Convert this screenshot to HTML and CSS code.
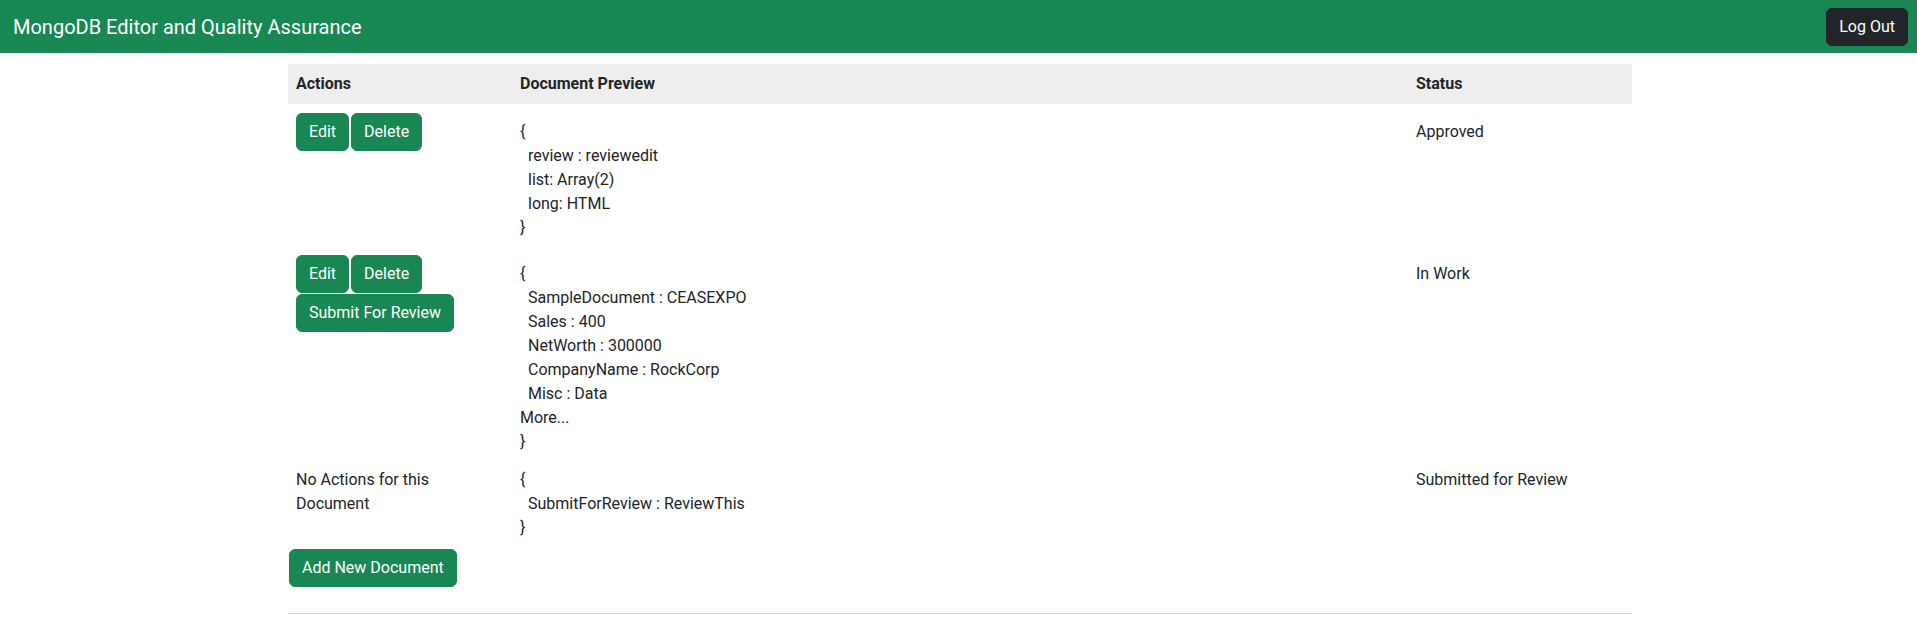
FILE: index.html
```html
<!DOCTYPE html>
<html lang="en">
<head>
<meta charset="utf-8">
<title>MongoDB Editor and Quality Assurance</title>
<link rel="stylesheet" href="styles.css">
</head>
<body>
<nav class="navbar">
  <span class="brand">MongoDB Editor and Quality Assurance</span>
  <button class="btn btn-dark">Log Out</button>
</nav>
<main class="container">
  <table class="doc-table">
    <colgroup>
      <col class="col-actions">
      <col class="col-preview">
      <col class="col-status">
    </colgroup>
    <thead>
      <tr>
        <th>Actions</th>
        <th>Document Preview</th>
        <th>Status</th>
      </tr>
    </thead>
    <tbody>
      <tr>
        <td>
          <div class="actions">
            <button class="btn btn-success">Edit</button>
            <button class="btn btn-success">Delete</button>
          </div>
        </td>
        <td>
          <div class="preview">
            <div>{</div>
            <div class="field">review : reviewedit</div>
            <div class="field">list: Array(2)</div>
            <div class="field">long: HTML</div>
            <div>}</div>
          </div>
        </td>
        <td>Approved</td>
      </tr>
      <tr>
        <td>
          <div class="actions">
            <button class="btn btn-success">Edit</button>
            <button class="btn btn-success">Delete</button>
            <button class="btn btn-success">Submit For Review</button>
          </div>
        </td>
        <td>
          <div class="preview">
            <div>{</div>
            <div class="field">SampleDocument : CEASEXPO</div>
            <div class="field">Sales : 400</div>
            <div class="field">NetWorth : 300000</div>
            <div class="field">CompanyName : RockCorp</div>
            <div class="field">Misc : Data</div>
            <div>More...</div>
            <div>}</div>
          </div>
        </td>
        <td>In Work</td>
      </tr>
      <tr>
        <td>No Actions for this<br>Document</td>
        <td>
          <div class="preview">
            <div>{</div>
            <div class="field">SubmitForReview : ReviewThis</div>
            <div>}</div>
          </div>
        </td>
        <td>Submitted for Review</td>
      </tr>
    </tbody>
  </table>
  <button class="btn btn-success btn-add">Add New Document</button>
  <hr class="divider">
</main>
</body>
</html>
```

FILE: styles.css
```css
* {
  box-sizing: border-box;
}

body {
  margin: 0;
  font-family: Roboto, "Liberation Sans", sans-serif;
  font-size: 16px;
  line-height: 24px;
  color: #212529;
  background: #ffffff;
}

.navbar {
  height: 53px;
  background: #198754;
  display: flex;
  align-items: center;
  justify-content: space-between;
  padding: 0 9px 0 13px;
}

.brand {
  color: #ffffff;
  font-size: 20px;
  line-height: 30px;
}

.btn {
  font-family: inherit;
  font-size: 16px;
  line-height: 24px;
  color: #ffffff;
  border-radius: 6px;
  padding: 6px 12px;
  cursor: pointer;
}

.btn-dark {
  background: #212529;
  border: 1px solid #212529;
  padding: 6px 12px;
}

.btn-success {
  background: #198754;
  border: 1px solid #198754;
}

.container {
  width: 1344px;
  margin: 11px 0 0 288px;
}

.doc-table {
  width: 100%;
  border-collapse: collapse;
  table-layout: fixed;
}

.col-actions {
  width: 224px;
}

.col-preview {
  width: 896px;
}

.col-status {
  width: 224px;
}

.doc-table th {
  background: #eeeeee;
  text-align: left;
  font-weight: 700;
  padding: 8px;
  height: 40px;
}

.doc-table td {
  padding: 8px 8px 6px;
  vertical-align: baseline;
}

.actions {
  display: flex;
  flex-wrap: wrap;
  gap: 1px 2px;
  padding-top: 1px;
}

.field {
  padding-left: 8px;
}

.btn-add {
  display: block;
  margin: 3px 0 0 1px;
}

.divider {
  margin: 26px 0 0;
  border: 0;
  border-top: 1px solid #d6d6d6;
}
```
